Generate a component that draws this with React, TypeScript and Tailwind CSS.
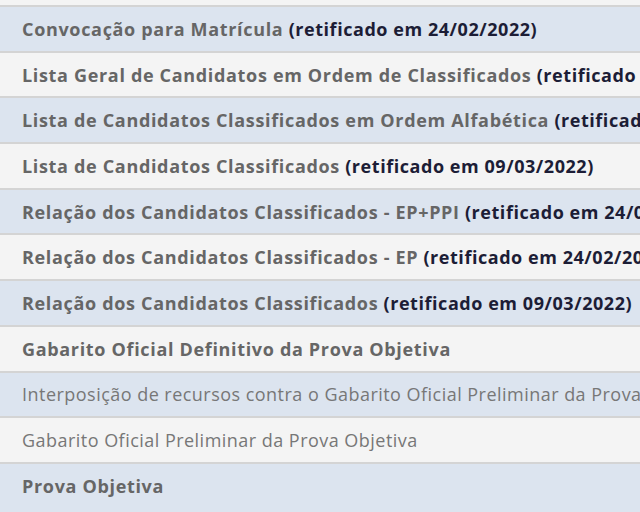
import React from 'react'

type Item = {
  title: string
  note?: string
  bold?: boolean
}

const items: Item[] = [
  { title: 'Convocação para Matrícula', note: '(retificado em 24/02/2022)', bold: true },
  { title: 'Lista Geral de Candidatos em Ordem de Classificados', note: '(retificado em 09/03/2022)', bold: true },
  { title: 'Lista de Candidatos Classificados em Ordem Alfabética', note: '(retificado em 09/03/2022)', bold: true },
  { title: 'Lista de Candidatos Classificados', note: '(retificado em 09/03/2022)', bold: true },
  { title: 'Relação dos Candidatos Classificados - EP+PPI', note: '(retificado em 24/02/2022)', bold: true },
  { title: 'Relação dos Candidatos Classificados - EP', note: '(retificado em 24/02/2022)', bold: true },
  { title: 'Relação dos Candidatos Classificados', note: '(retificado em 09/03/2022)', bold: true },
  { title: 'Gabarito Oficial Definitivo da Prova Objetiva', bold: true },
  { title: 'Interposição de recursos contra o Gabarito Oficial Preliminar da Prova Objetiva' },
  { title: 'Gabarito Oficial Preliminar da Prova Objetiva' },
  { title: 'Prova Objetiva', bold: true },
]

export default function App() {
  return (
    <div
      className="h-[512px] w-[640px] overflow-hidden bg-[#dce4ef]"
      style={{ fontFamily: '"Open Sans", "Noto Sans", sans-serif' }}
    >
      {/* tail of the row above */}
      <div className="h-[5px] bg-[#f4f4f4]" />
      <ul>
        {items.map((item, i) => (
          <li
            key={i}
            className={`overflow-hidden whitespace-nowrap border-t-2 border-[#d4d4d4] px-[22px] py-[9.85px] text-[18px] leading-6 ${
              i % 2 === 0 ? 'bg-[#dce4ef]' : 'bg-[#f4f4f4]'
            }`}
          >
            <a
              href="#"
              className={
                item.bold
                  ? 'font-bold tracking-[0.67px] text-[#666666]'
                  : 'font-normal tracking-[0.47px] text-[#777777]'
              }
            >
              {item.title}
            </a>
            {item.note && (
              <span className="font-bold tracking-[0.55px] text-[#1c1d36]"> {item.note}</span>
            )}
          </li>
        ))}
      </ul>
    </div>
  )
}
